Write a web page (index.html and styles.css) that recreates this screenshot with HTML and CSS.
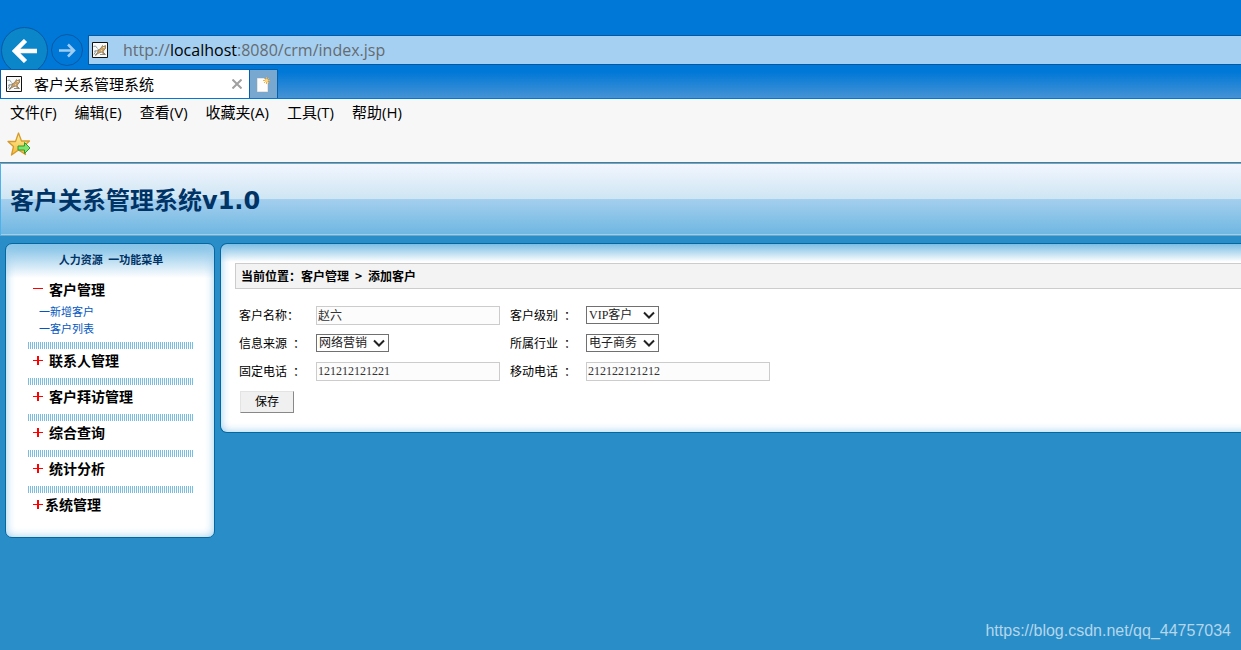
FILE: index.html
```
<!DOCTYPE html>
<html lang="zh-CN">
<head>
<meta charset="utf-8">
<title>客户关系管理系统</title>
<link rel="stylesheet" href="styles.css">
</head>
<body>
<svg class="defs" aria-hidden="true">
  <symbol id="cat" viewBox="0 0 16 16">
    <path d="M.5.5h15v15H.5z" fill="#f8faf9" stroke="#111"/>
    <path d="M1.500 4.500l2-.5 2 2.500M2 12.500l2-3.500 3-1.500M2 9.500l2-1" fill="none" stroke="#8b9a9a" stroke-width="1"/>
    <path d="M6 8.500l3-2.500 1.500-2.500 1 1 2-1v3l-1.500 1.500-1 2 2.500 2.500-2-.5-2-2-2.500 1-3.500 2 2-2.500z" fill="#c9a166" stroke="#6d5c45" stroke-width=".6"/>
    <path d="M11 5.500h1.500M9 8.500l1 .5" stroke="#f7e3b8" stroke-width="1"/>
    <path d="M8 12.500h5M3 13.500l2-1" stroke="#77796f" stroke-width=".8"/>
  </symbol>
  <symbol id="chevron" viewBox="0 0 12 8"><path d="M1 1.500l5 5 5-5" fill="none" stroke="#222" stroke-width="2"/></symbol>
  <symbol id="plus" viewBox="0 0 10 10"><path d="M0 5h10v1H0zM4 1h2v9H4z" fill="#f00"/></symbol>
  <symbol id="minus" viewBox="0 0 10 10"><path d="M0 4h10v1H0z" fill="#f00"/></symbol>
</svg>

<header class="chrome">
  <div class="nav">
    <button class="round back" aria-label="后退"><svg viewBox="0 0 26 24"><path d="M13.500 1.500L3 12l10.500 10.500M3 12h22" fill="none" stroke="#fff" stroke-width="4.500"/></svg></button>
    <button class="round forward" aria-label="前进"><svg viewBox="0 0 17 15"><path d="M9 1.500l6 6-6 6M0 7.500h15" fill="none" stroke="#9fcdf2" stroke-width="2.500"/></svg></button>
    <div class="address"><svg class="cat"><use href="#cat"/></svg><span>http://<b>localhost</b>:8080/crm/index.jsp</span></div>
  </div>
  <div class="tabs">
    <div class="tab"><svg class="cat"><use href="#cat"/></svg><span class="tab-name">客户关系管理系统</span>
      <button class="close" aria-label="关闭"><svg viewBox="0 0 10 10"><path d="M.5.5l9 9M9.500.5l-9 9" stroke="#a0a0a0" stroke-width="2"/></svg></button></div>
    <button class="new-tab" aria-label="新建标签页"><svg viewBox="0 0 15 15"><path d="M1.500 1.500h7l3 4v9h-10z" fill="#fdfdfd" stroke="#e9e4dc"/><path d="M10.500 0v7M7 3.500h7M8 1l5 5M13 1L8 6" stroke="#f3b13c" stroke-width="1"/><circle cx="10.500" cy="3.500" r="1.500" fill="#ffd887"/></svg></button>
  </div>
</header>

<div class="toolbar">
  <nav class="menus"><button>文件(F)</button><button>编辑(E)</button><button>查看(V)</button><button>收藏夹(A)</button><button>工具(T)</button><button>帮助(H)</button></nav>
  <button class="favorite" aria-label="添加到收藏夹"><svg viewBox="0 0 24 24">
    <defs><linearGradient id="gold" x2="0" y2="1"><stop offset="0" stop-color="#fff3a8"/><stop offset="1" stop-color="#f6b62f"/></linearGradient></defs>
    <path d="M11.500 1l3 8h8l-6 5.500 2 8-7-4.500-7 5 2-8.500L1 9.500h7.500z" fill="url(#gold)" stroke="#d69a2c" stroke-width="1.300" stroke-linejoin="round"/>
    <path d="M11 14h6.500v-3.500l5.500 5.500-5.500 5.500V18H11z" fill="#7fe36a" stroke="#2f9a35"/></svg></button>
</div>

<div class="banner"><h1>客户关系管理系统v1.0</h1></div>

<div class="workspace">
  <aside class="panel sidebar">
    <h2>人力资源&ensp;一功能菜单</h2>
    <section class="group"><button class="entry"><svg><use href="#minus"/></svg>客户管理</button>
      <a class="sub" href="#add">一新增客户</a><a class="sub" href="#list">一客户列表</a></section>
    <section class="group"><button class="entry"><svg><use href="#plus"/></svg>联系人管理</button></section>
    <section class="group"><button class="entry"><svg><use href="#plus"/></svg>客户拜访管理</button></section>
    <section class="group"><button class="entry"><svg><use href="#plus"/></svg>综合查询</button></section>
    <section class="group"><button class="entry"><svg><use href="#plus"/></svg>统计分析</button></section>
    <section class="group"><button class="entry tight"><svg><use href="#plus"/></svg>系统管理</button></section>
  </aside>
  <main class="panel content">
    <div class="crumb">当前位置：客户管理&ensp;&gt;&ensp;添加客户</div>
    <form class="form">
      <label for="name">客户名称：</label><div><input id="name" type="text" value="赵六"></div>
      <label for="level">客户级别&ensp;：</label><div><span class="pick"><select id="level"><option>VIP客户</option></select><svg><use href="#chevron"/></svg></span></div>
      <label for="source">信息来源&ensp;：</label><div><span class="pick"><select id="source"><option>网络营销</option></select><svg><use href="#chevron"/></svg></span></div>
      <label for="trade">所属行业&ensp;：</label><div><span class="pick"><select id="trade"><option>电子商务</option></select><svg><use href="#chevron"/></svg></span></div>
      <label for="phone">固定电话&ensp;：</label><div><input id="phone" type="text" value="121212121221"></div>
      <label for="mobile">移动电话&ensp;：</label><div><input id="mobile" type="text" value="212122121212"></div>
      <button class="save" type="button">保存</button>
    </form>
  </main>
</div>
<div class="watermark">https://blog.csdn.net/qq_44757034</div>
</body>
</html>
```
FILE: styles.css
```
* { box-sizing: border-box; }
body {
  margin: 0;
  min-height: 100vh;
  position: relative;
  overflow-x: hidden;
  background: #298dc8;
  font: 12px/16px "Liberation Serif", "Noto Sans CJK SC", sans-serif;
  color: #000;
}
button { margin: 0; padding: 0; border: 0; background: none; font: inherit; color: inherit; }
svg { display: block; }
.defs { position: absolute; width: 0; height: 0; }
.cat { width: 16px; height: 16px; flex: none; }

/* Browser frame */
.chrome {
  padding-top: 27px;
  border-bottom: 1px solid #0078d7;
  background: linear-gradient(#0078d7 72px, #4593d4 98px);
}
.nav { display: flex; align-items: flex-start; height: 42px; overflow: hidden; padding-left: 1px; }
.round { flex: none; display: grid; place-items: center; border: 1px solid #0659a3; border-radius: 50%; }
.back { width: 47px; height: 47px; background: #0b87c9; }
.back svg { width: 26px; height: 24px; }
.forward { width: 32px; height: 32px; margin: 7px 5px 0 3px; }
.forward svg { width: 17px; height: 15px; }
.address {
  flex: 1;
  display: flex;
  align-items: center;
  gap: 15px;
  height: 30px;
  margin-top: 8px;
  padding-left: 3px;
  border: 1px solid #0559a2;
  border-right: 0;
  background: #a5d0f2;
  color: #666b70;
  font: 16px/24px "Open Sans", sans-serif;
}
.address b { font-weight: 400; color: #000; }
.tabs { display: flex; height: 29px; }
.tab {
  display: flex;
  align-items: center;
  width: 250px;
  padding: 0 7px 0 5px;
  border: 1px solid #0560ad;
  border-bottom: 0;
  background: #fff;
  font: 15px/20px "Open Sans", "Noto Sans CJK SC", sans-serif;
}
.tab-name { flex: 1; margin-left: 12px; }
.close svg { width: 10px; height: 10px; }
.new-tab { width: 28px; display: grid; place-items: center; border: 1px solid #0560ad; border-left: 0; border-bottom: 0; background: #78a7d0; }
.new-tab svg { width: 15px; height: 15px; }

.toolbar { height: 64px; padding: 3px 7px 0; border-bottom: 1px solid #707070; background: #f7f7f7; }
.menus { display: flex; gap: 18px; padding-left: 3px; font: 15px/20px "Open Sans", "Noto Sans CJK SC", sans-serif; }
.favorite { display: block; margin-top: 10px; }
.favorite svg { width: 24px; height: 24px; }

/* Page header */
.banner {
  padding: 20px 9px 17px;
  border: 1px solid #4db1ea;
  border-right: 0;
  box-shadow: inset 0 -1px #b9c6cf;
  background: linear-gradient(#f2f6fe, #cee5f3 35px, #a5cfee 35px, #6fb7e2 70px);
}
.banner h1 { margin: 0; font: 700 24px/34px "DejaVu Sans", "Noto Sans CJK SC", sans-serif; color: #036; }

.workspace { display: flex; align-items: flex-start; gap: 5px; padding: 7px 0 0 5px; }
.panel {
  border: 1px solid #0467a0;
  border-radius: 7px;
  background: #fff;
  box-shadow: inset 0 0 10px #9acded;
}
.sidebar {
  flex: none;
  width: 210px;
  padding: 7px 20px 22px 22px;
  background: linear-gradient(#7cbee5, #fff 34px);
}
.sidebar h2 { margin: 0 0 11px; text-align: center; font: 700 11px/16px "Noto Sans CJK SC", sans-serif; color: #036; }
.group { padding-bottom: 7px; }
.group + .group {
  padding-top: 7px;
  background: repeating-linear-gradient(90deg, #7abde3 0 1px, #fff 1px 2px) top / 100% 7px no-repeat;
}
.entry { display: flex; align-items: center; gap: 6px; padding-left: 5px; font: 700 14px/22px "Noto Sans CJK SC", sans-serif; }
.entry svg { width: 10px; height: 10px; }
.tight { gap: 2px; }
.sub { display: block; margin-left: 11px; font: 11px/17px "Noto Sans CJK SC", sans-serif; color: #0357c1; text-decoration: none; }
.group:first-of-type { padding-bottom: 5px; }
.group:first-of-type .entry { margin-bottom: 3px; }
.group:last-child { padding-bottom: 0; }

.content {
  flex: 1;
  padding: 19px 0 19px 14px;
  border-right: 0;
  border-radius: 7px 0 0 7px;
  box-shadow: inset 10px 0 10px -10px #9acded, inset 0 -10px 10px -10px #9acded;
  background: linear-gradient(#7cbee5, #fff 18px);
}
.crumb {
  padding: 0 5px;
  border: 1px solid #ccc;
  border-right: 0;
  background: #f3f3f3;
  font: 700 12px/24px "Noto Sans CJK SC", sans-serif;
}
.form {
  display: grid;
  grid-template-columns: 77px 194px 76px 184px;
  grid-auto-rows: 28px;
  align-items: center;
  margin: 12px 0 0 4px;
}
.form label { font: 12px/16px "Noto Sans CJK SC", sans-serif; white-space: nowrap; }
.form input {
  display: block;
  width: 184px;
  height: 19px;
  padding: 0 1px;
  border: 1px solid #ccc;
  background: #fcfcfc;
  font: inherit;
  color: #333;
}
.pick { position: relative; display: block; width: 73px; }
.pick select {
  appearance: none;
  display: block;
  width: 100%;
  height: 18px;
  padding: 0 0 0 2px;
  border: 1px solid #707070;
  border-radius: 0;
  background: #fff;
  font: inherit;
  line-height: 16px;
  color: #222;
}
.pick svg { position: absolute; right: 4px; top: 5px; width: 12px; height: 8px; pointer-events: none; }
.save {
  width: 54px;
  height: 22px;
  margin: 6px 0 0 1px;
  border: 1px solid;
  border-color: #e3e3e3 #888 #888 #e3e3e3;
  background: #f0f0f0;
}
.watermark {
  position: absolute;
  right: 10px;
  bottom: 10px;
  font: 16px/18px "Liberation Sans", sans-serif;
  color: #b4d6eb;
}
```
